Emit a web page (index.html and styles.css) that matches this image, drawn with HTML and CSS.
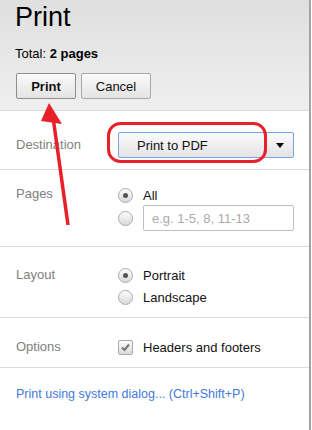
FILE: index.html
```html
<!DOCTYPE html>
<html lang="en">
<head>
  <meta charset="UTF-8">
  <title>Print</title>
  <link rel="stylesheet" href="styles.css">
</head>
<body>
  <div class="page">
    <!-- Header with title and actions -->
    <header class="head">
      <h1 class="title">Print</h1>
      <div class="total">Total: <b>2 pages</b></div>
      <div class="actions">
        <button class="btn btn-print">Print</button>
        <button class="btn btn-cancel">Cancel</button>
      </div>
    </header>

    <!-- Settings rows -->
    <section class="row row-dest">
      <div class="label">Destination</div>
      <div class="controls">
        <div class="select"><span>Print to PDF</span><span class="caret"></span></div>
      </div>
    </section>

    <section class="row row-pages">
      <div class="label">Pages</div>
      <div class="controls">
        <div class="opt opt-all"><span class="radio on"></span>All</div>
        <div class="opt opt-range"><span class="radio"></span><input class="range" placeholder="e.g. 1-5, 8, 11-13"></div>
      </div>
    </section>

    <section class="row row-layout">
      <div class="label">Layout</div>
      <div class="controls">
        <div class="opt"><span class="radio on"></span>Portrait</div>
        <div class="opt"><span class="radio"></span>Landscape</div>
      </div>
    </section>

    <section class="row row-options">
      <div class="label">Options</div>
      <div class="controls">
        <div class="opt">
          <span class="check">
            <svg width="13" height="13" viewBox="0 0 13 13"><path d="M3 6.5 L5.5 9 L10 3.5" fill="none" stroke="#777" stroke-width="2"/></svg>
          </span>Headers and footers
        </div>
      </div>
    </section>

    <a class="sys-link" href="#">Print using system dialog... (Ctrl+Shift+P)</a>

    <!-- red annotations drawn over the dialog -->
    <svg class="marks" width="312" height="430" viewBox="0 0 312 430">
      <rect x="108.5" y="123.5" width="157" height="38" rx="12" fill="none" stroke="#e8202a" stroke-width="3"/>
      <line x1="68" y1="225" x2="53" y2="117" stroke="#e8202a" stroke-width="3.5"/>
      <polygon points="49,103 41,121 62,124" fill="#e8202a"/>
    </svg>
  </div>
</body>
</html>
```

FILE: styles.css
```css
/* Reset */
html, body {
  margin: 0;
  padding: 0;
  background: #fff;
  font-family: "Liberation Sans", Arial, sans-serif;
  font-size: 13px;
  color: #222;
}
/* Dialog panel with grey edge on the right */
.page {
  position: relative;
  width: 309px;
  min-height: 430px;
  border-right: 2px solid #a3a3a3;
}
/* Header */
.head {
  padding: 2px 0 11px 15px;
  background: linear-gradient(#dfdfdf, #efefef);
  border-bottom: 1px solid #dadada;
}
.title {
  margin: 0;
  font-size: 27px;
  font-weight: normal;
  line-height: 30px;
  color: #000;
}
.total {
  margin-top: 14px;
  line-height: 16px;
  color: #000;
}
.actions {
  display: flex;
  gap: 5px;
  margin-top: 11px;
  padding-left: 1px;
}
.btn {
  height: 26px;
  padding: 0;
  border: 1px solid #a8a8a8;
  border-radius: 2px;
  background: linear-gradient(#fbfbfb, #e3e3e3);
  font-family: inherit;
  font-size: 13px;
  color: #111;
}
.btn-print { width: 60px; font-weight: bold; border-color: #8f8f8f; }
.btn-cancel { width: 70px; }
/* Settings rows */
.row {
  display: flex;
  padding-left: 16px;
  border-bottom: 1px solid #dcdcdc;
}
.label {
  flex: 0 0 102px;
  color: #808080;
}
.controls {
  display: flex;
  flex-direction: column;
}
.row-dest { padding: 21px 0 11px 16px; }
.row-dest .label { line-height: 26px; }
.row-pages { padding-top: 16px; padding-bottom: 15px; }
.row-pages .label { line-height: 16px; }
.row-layout { padding-top: 17px; padding-bottom: 9px; }
.row-layout .label { line-height: 22px; }
.row-options { padding-top: 18px; padding-bottom: 9px; }
.row-options .label { line-height: 22px; }
/* Destination select */
.select {
  box-sizing: border-box;
  display: flex;
  align-items: center;
  justify-content: space-between;
  width: 176px;
  height: 26px;
  padding: 0 9px 0 18px;
  border: 1px solid #76a2e6;
  border-radius: 2px;
  background: linear-gradient(#fbfbfb, #e4e4e4);
  color: #111;
}
.caret {
  width: 0;
  height: 0;
  border-left: 4px solid transparent;
  border-right: 4px solid transparent;
  border-top: 5px solid #000;
}
/* Radio / checkbox options */
.opt {
  display: flex;
  align-items: center;
  gap: 10px;
  height: 22px;
  color: #111;
}
.opt-all { height: 19px; }
.opt-range { height: 26px; }
.radio {
  box-sizing: border-box;
  position: relative;
  flex: none;
  width: 15px;
  height: 15px;
  border: 1px solid #aaa;
  border-radius: 50%;
  background: linear-gradient(#fdfdfd, #d9d9d9);
}
.radio.on::after {
  content: "";
  position: absolute;
  left: 4px; top: 4px;
  width: 5px; height: 5px;
  border-radius: 50%;
  background: #555;
}
.check {
  box-sizing: border-box;
  display: flex;
  align-items: center;
  justify-content: center;
  flex: none;
  width: 15px;
  height: 15px;
  border: 1px solid #aaa;
  border-radius: 2px;
  background: linear-gradient(#fdfdfd, #dadada);
}
.range {
  box-sizing: border-box;
  width: 151px;
  height: 26px;
  padding: 0 8px;
  border: 1px solid #c0c0c0;
  border-radius: 2px;
  font-family: inherit;
  font-size: 13px;
}
.range::placeholder { color: #aaa; }
/* System dialog link */
.sys-link {
  display: block;
  padding: 18px 0 0 16px;
  line-height: 16px;
  font-size: 12.5px;
  color: #4279e0;
  text-decoration: none;
}
/* Annotation overlay */
.marks {
  position: absolute;
  top: 0; left: 0;
  pointer-events: none;
}
```
